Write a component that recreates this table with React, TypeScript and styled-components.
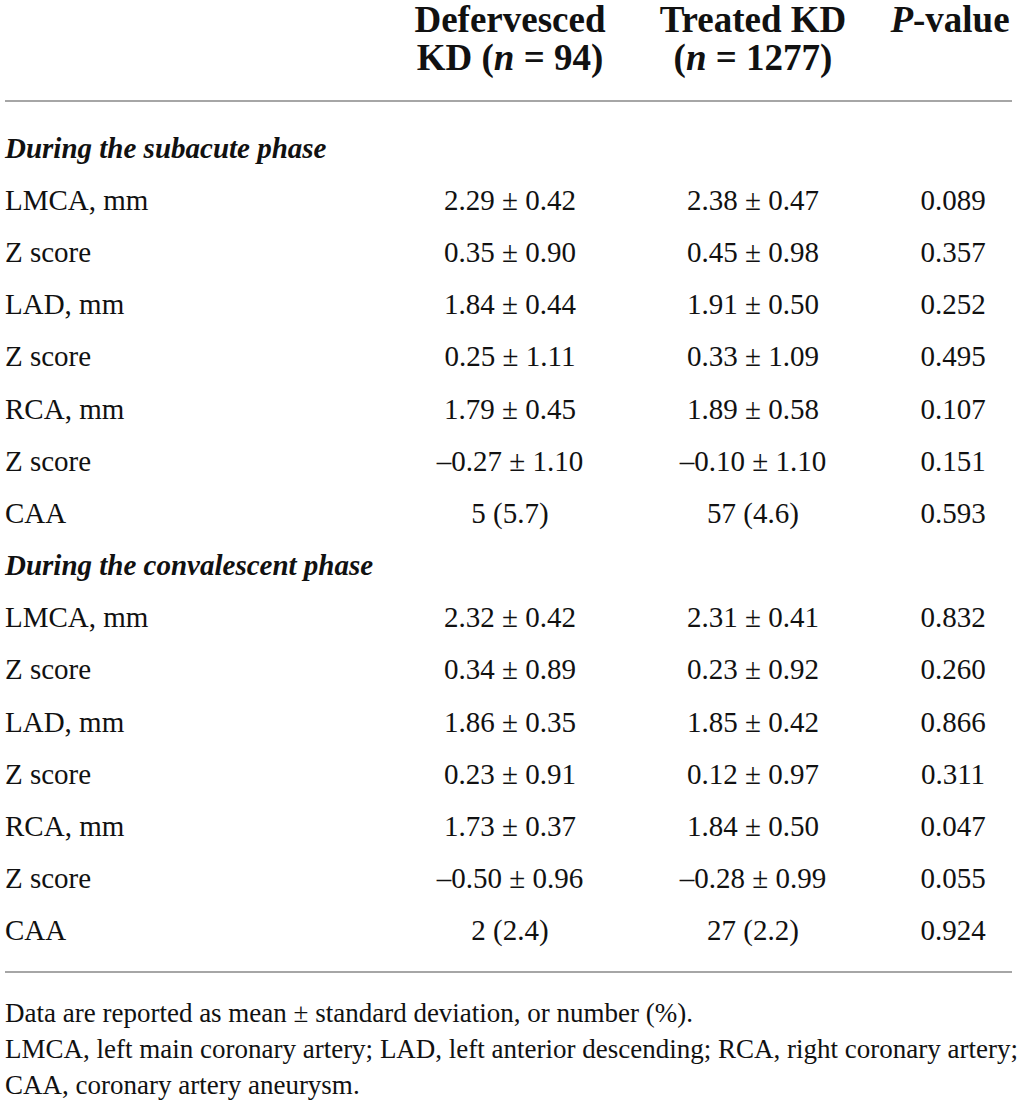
import React from 'react';
import styled, { createGlobalStyle } from 'styled-components';

const Global = createGlobalStyle`
  body {
    margin: 0;
    background: #ffffff;
    color: #111111;
    font-family: "Liberation Serif", "Times New Roman", serif;
  }
`;

const Page = styled.div`
  width: 1017px;
  padding: 0 5px;
  box-sizing: border-box;
`;

const Grid = styled.div`
  display: grid;
  grid-template-columns: 397px 216px 270px 124px;
`;

const Head = styled(Grid)`
  padding: 1px 0 23px;
  border-bottom: 2px solid #a6a6a6;
`;

const HeadCell = styled.div`
  font-size: 37px;
  font-weight: 700;
  line-height: 38px;
  text-align: center;
  white-space: nowrap;
`;

const Body = styled.div`
  padding: 20px 0 14px;
  border-bottom: 2px solid #a6a6a6;
`;

const Row = styled(Grid)`
  height: 52.2px;
  align-items: center;
  font-size: 29px;
`;

const Label = styled.div`
  text-align: left;
`;

const Value = styled.div<{ $pad?: number }>`
  text-align: center;
  padding-left: ${(p) => p.$pad ?? 0}px;
  white-space: nowrap;
`;

const Section = styled.div`
  height: 52.2px;
  display: flex;
  align-items: center;
  font-size: 29px;
  font-weight: 700;
  font-style: italic;
`;

const Notes = styled.div`
  padding-top: 22px;
  font-size: 27px;
  line-height: 36px;
  white-space: nowrap;
`;

type Line = [string, string, string, string];

const subacute: Line[] = [
  ['LMCA, mm', '2.29 ± 0.42', '2.38 ± 0.47', '0.089'],
  ['Z score', '0.35 ± 0.90', '0.45 ± 0.98', '0.357'],
  ['LAD, mm', '1.84 ± 0.44', '1.91 ± 0.50', '0.252'],
  ['Z score', '0.25 ± 1.11', '0.33 ± 1.09', '0.495'],
  ['RCA, mm', '1.79 ± 0.45', '1.89 ± 0.58', '0.107'],
  ['Z score', '–0.27 ± 1.10', '–0.10 ± 1.10', '0.151'],
  ['CAA', '5 (5.7)', '57 (4.6)', '0.593'],
];

const convalescent: Line[] = [
  ['LMCA, mm', '2.32 ± 0.42', '2.31 ± 0.41', '0.832'],
  ['Z score', '0.34 ± 0.89', '0.23 ± 0.92', '0.260'],
  ['LAD, mm', '1.86 ± 0.35', '1.85 ± 0.42', '0.866'],
  ['Z score', '0.23 ± 0.91', '0.12 ± 0.97', '0.311'],
  ['RCA, mm', '1.73 ± 0.37', '1.84 ± 0.50', '0.047'],
  ['Z score', '–0.50 ± 0.96', '–0.28 ± 0.99', '0.055'],
  ['CAA', '2 (2.4)', '27 (2.2)', '0.924'],
];

const Rows = ({ data }: { data: Line[] }) => (
  <>
    {data.map((r, i) => (
      <Row key={i}>
        <Label>{r[0]}</Label>
        <Value>{r[1]}</Value>
        <Value>{r[2]}</Value>
        <Value $pad={6}>{r[3]}</Value>
      </Row>
    ))}
  </>
);

const App = () => {
  return (
    <Page>
      <Global />
      <Head>
        <div />
        <HeadCell>
          Defervesced
          <br />
          KD (<i>n</i> = 94)
        </HeadCell>
        <HeadCell>
          Treated KD
          <br />
          (<i>n</i> = 1277)
        </HeadCell>
        <HeadCell>
          <i>P</i>-value
        </HeadCell>
      </Head>
      <Body>
        <Section>During the subacute phase</Section>
        <Rows data={subacute} />
        <Section>During the convalescent phase</Section>
        <Rows data={convalescent} />
      </Body>
      <Notes>
        Data are reported as mean ± standard deviation, or number (%).
        <br />
        LMCA, left main coronary artery; LAD, left anterior descending; RCA, right coronary artery;
        <br />
        CAA, coronary artery aneurysm.
      </Notes>
    </Page>
  );
};

export default App;
